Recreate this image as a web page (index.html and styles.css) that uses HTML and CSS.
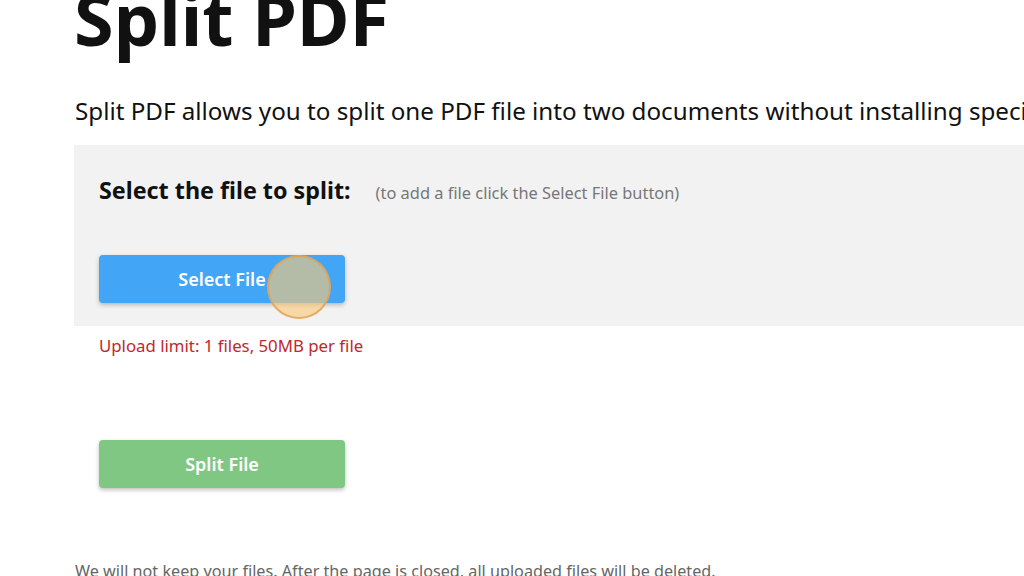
FILE: index.html
```html
<!DOCTYPE html>
<html lang="en">
  <head>
    <meta charset="UTF-8" />
    <meta name="viewport" content="width=device-width, initial-scale=1.0" />
    <title>Split PDF</title>
    <link rel="stylesheet" href="styles.css">
  </head>
  <body>
    <div class="page">
      <h1 class="title">Split PDF</h1>
      <p class="lead">Split PDF allows you to split one PDF file into two documents without installing special software.</p>

      <div class="upload-box">
        <div class="upload-head">
          <h3>Select the file to split:</h3>
          <span class="hint">(to add a file click the Select File button)</span>
        </div>
        <div class="select-wrap">
          <button class="btn btn-blue">Select File</button>
          <span class="cursor-dot"></span>
        </div>
      </div>
      <div class="limit">Upload limit: 1 files, 50MB per file</div>

      <button class="btn btn-green">Split File</button>

      <p class="note">We will not keep your files. After the page is closed, all uploaded files will be deleted.</p>
    </div>
  </body>
</html>
```

FILE: styles.css
```css
html, body {
  margin: 0;
  padding: 0;
  background-color: #fff;
  overflow: hidden;
  height: 576px;
}

body {
  font-family: "Noto Sans", "Open Sans", sans-serif;
  color: #111;
}

.page {
  padding-left: 75px;
}

.title {
  font-size: 72px;
  font-weight: 700;
  line-height: 1;
  margin: -18px 0 0 -1px;
  white-space: nowrap;
}

.lead {
  font-size: 24.2px;
  margin: 41px 0 0 0;
  white-space: nowrap;
  line-height: 1.3;
}

.upload-box {
  background-color: #f2f2f2;
  margin: 19px 0 0 -1px;
  padding: 29px 0 25px 25px;
  height: 127px;
}

.upload-head {
  display: flex;
  align-items: baseline;
}

.upload-head h3 {
  font-size: 23.3px;
  font-weight: 700;
  margin: 0;
  margin-right: 25px;
}

.hint {
  font-size: 16.4px;
  color: #777;
}

.select-wrap {
  position: relative;
  width: 246px;
  margin-top: 49px;
}

.btn {
  display: block;
  width: 246px;
  height: 48px;
  border: none;
  border-radius: 4px;
  color: #fff;
  font-family: "Noto Sans", "Open Sans", sans-serif;
  font-size: 18px;
  font-weight: 600;
  box-shadow: 0 2px 4px rgba(0, 0, 0, 0.25);
}

.btn-blue {
  background-color: #42a5f5;
}

.btn-green {
  background-color: #81c784;
  margin: 83px 0 0 24px;
}

.cursor-dot {
  position: absolute;
  left: 168px;
  top: 0;
  width: 60px;
  height: 60px;
  border-radius: 50%;
  background-color: rgba(250, 200, 120, 0.62);
  border: 2px solid rgba(225, 160, 80, 0.8);
}

.limit {
  color: #c0282d;
  font-size: 16.8px;
  margin: 8px 0 0 24px;
}

.note {
  color: #666;
  font-size: 16.2px;
  margin: 72px 0 0 0;
  white-space: nowrap;
}
```
